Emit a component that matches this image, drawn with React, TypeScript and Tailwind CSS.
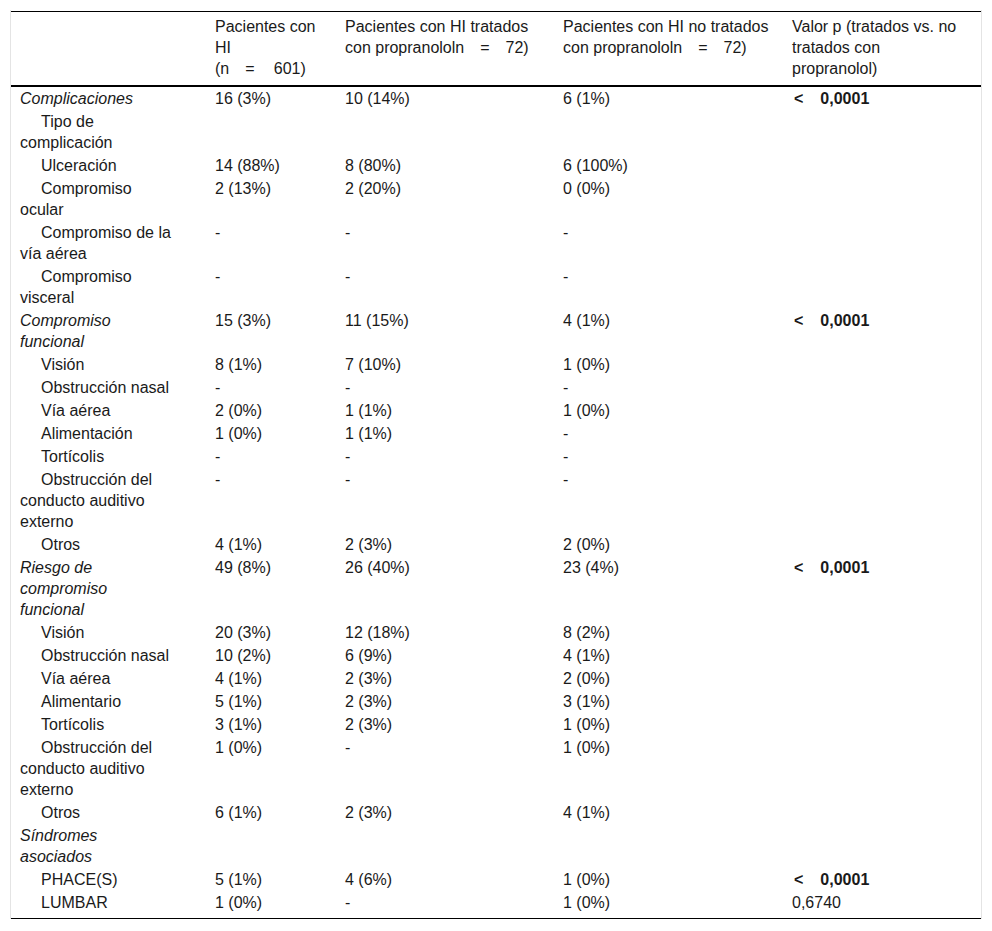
type Row = {
  label: string[];
  sub?: boolean;
  cat?: boolean;
  all?: string;
  trat?: string;
  notrat?: string;
  p?: string;
  pBold?: boolean;
};

const rows: Row[] = [
  { label: ["Complicaciones"], cat: true, all: "16 (3%)", trat: "10 (14%)", notrat: "6 (1%)", p: "0,0001", pBold: true },
  { label: ["Tipo de", "complicación"], sub: true },
  { label: ["Ulceración"], sub: true, all: "14 (88%)", trat: "8 (80%)", notrat: "6 (100%)" },
  { label: ["Compromiso", "ocular"], sub: true, all: "2 (13%)", trat: "2 (20%)", notrat: "0 (0%)" },
  { label: ["Compromiso de la", "vía aérea"], sub: true, all: "-", trat: "-", notrat: "-" },
  { label: ["Compromiso", "visceral"], sub: true, all: "-", trat: "-", notrat: "-" },
  { label: ["Compromiso", "funcional"], cat: true, all: "15 (3%)", trat: "11 (15%)", notrat: "4 (1%)", p: "0,0001", pBold: true },
  { label: ["Visión"], sub: true, all: "8 (1%)", trat: "7 (10%)", notrat: "1 (0%)" },
  { label: ["Obstrucción nasal"], sub: true, all: "-", trat: "-", notrat: "-" },
  { label: ["Vía aérea"], sub: true, all: "2 (0%)", trat: "1 (1%)", notrat: "1 (0%)" },
  { label: ["Alimentación"], sub: true, all: "1 (0%)", trat: "1 (1%)", notrat: "-" },
  { label: ["Tortícolis"], sub: true, all: "-", trat: "-", notrat: "-" },
  { label: ["Obstrucción del", "conducto auditivo", "externo"], sub: true, all: "-", trat: "-", notrat: "-" },
  { label: ["Otros"], sub: true, all: "4 (1%)", trat: "2 (3%)", notrat: "2 (0%)" },
  { label: ["Riesgo de", "compromiso", "funcional"], cat: true, all: "49 (8%)", trat: "26 (40%)", notrat: "23 (4%)", p: "0,0001", pBold: true },
  { label: ["Visión"], sub: true, all: "20 (3%)", trat: "12 (18%)", notrat: "8 (2%)" },
  { label: ["Obstrucción nasal"], sub: true, all: "10 (2%)", trat: "6 (9%)", notrat: "4 (1%)" },
  { label: ["Vía aérea"], sub: true, all: "4 (1%)", trat: "2 (3%)", notrat: "2 (0%)" },
  { label: ["Alimentario"], sub: true, all: "5 (1%)", trat: "2 (3%)", notrat: "3 (1%)" },
  { label: ["Tortícolis"], sub: true, all: "3 (1%)", trat: "2 (3%)", notrat: "1 (0%)" },
  { label: ["Obstrucción del", "conducto auditivo", "externo"], sub: true, all: "1 (0%)", trat: "-", notrat: "1 (0%)" },
  { label: ["Otros"], sub: true, all: "6 (1%)", trat: "2 (3%)", notrat: "4 (1%)" },
  { label: ["Síndromes", "asociados"], cat: true },
  { label: ["PHACE(S)"], sub: true, all: "5 (1%)", trat: "4 (6%)", notrat: "1 (0%)", p: "0,0001", pBold: true },
  { label: ["LUMBAR"], sub: true, all: "1 (0%)", trat: "-", notrat: "1 (0%)", p: "0,6740" },
];

function Lines({ lines }: { lines: string[] }) {
  return (
    <>
      {lines.map((l, i) => (
        <span key={i}>
          {i > 0 && <br />}
          {l}
        </span>
      ))}
    </>
  );
}

// wide spacing around "=" as in the source
const eq = "\u2003=\u2003";

export default function App() {
  return (
    <div className="bg-white min-h-[931px] pt-[10px] font-['Liberation_Sans',Arial,sans-serif]">
      <div className="ml-[10px] w-[972px] border-x border-[#e4e4e4] pt-px text-[16px] leading-[21px] text-[#1a1a1a]">
        <table className="w-full table-fixed border-collapse border-y border-black">
          <colgroup>
            <col className="w-[199px]" />
            <col className="w-[130px]" />
            <col className="w-[218px]" />
            <col className="w-[229px]" />
            <col className="w-[194px]" />
          </colgroup>
          <thead>
            <tr className="border-b-2 border-black align-top text-left">
              <th className="pl-[9px] pt-[4px] pb-[6px] font-normal"></th>
              <th className="pl-[5px] pt-[4px] pb-[6px] font-normal">
                <Lines lines={["Pacientes con", "HI", `(n${eq}\u2009601)`]} />
              </th>
              <th className="pl-[5px] pt-[4px] pb-[6px] font-normal">
                <Lines lines={["Pacientes con HI tratados", `con propranololn${eq}72)`]} />
              </th>
              <th className="pl-[5px] pt-[4px] pb-[6px] font-normal">
                <Lines lines={["Pacientes con HI no tratados", `con propranololn${eq}72)`]} />
              </th>
              <th className="pl-[5px] pt-[4px] pb-[6px] font-normal">
                <Lines lines={["Valor p (tratados vs. no", "tratados con", "propranolol)"]} />
              </th>
            </tr>
          </thead>
          <tbody>
            {rows.map((r, i) => {
              const last = i === rows.length - 1;
              const pad = last ? "pt-px pb-[5px]" : "py-px";
              return (
                <tr key={i} className="align-top">
                  <td className={`pl-[9px] ${pad} ${r.cat ? "italic" : ""} ${r.sub ? "indent-[21px]" : ""}`}>
                    <Lines lines={r.label} />
                  </td>
                  <td className={`pl-[5px] ${pad}`}>{r.all}</td>
                  <td className={`pl-[5px] ${pad}`}>{r.trat}</td>
                  <td className={`pl-[5px] ${pad}`}>{r.notrat}</td>
                  <td className={`pl-[5px] ${pad}`}>
                    {r.p &&
                      (r.pBold ? (
                        <span className="font-bold">
                          <span className="pl-[2px]">&lt;</span>
                          <span className="ml-[17px]">{r.p}</span>
                        </span>
                      ) : (
                        r.p
                      ))}
                  </td>
                </tr>
              );
            })}
          </tbody>
        </table>
      </div>
    </div>
  );
}
